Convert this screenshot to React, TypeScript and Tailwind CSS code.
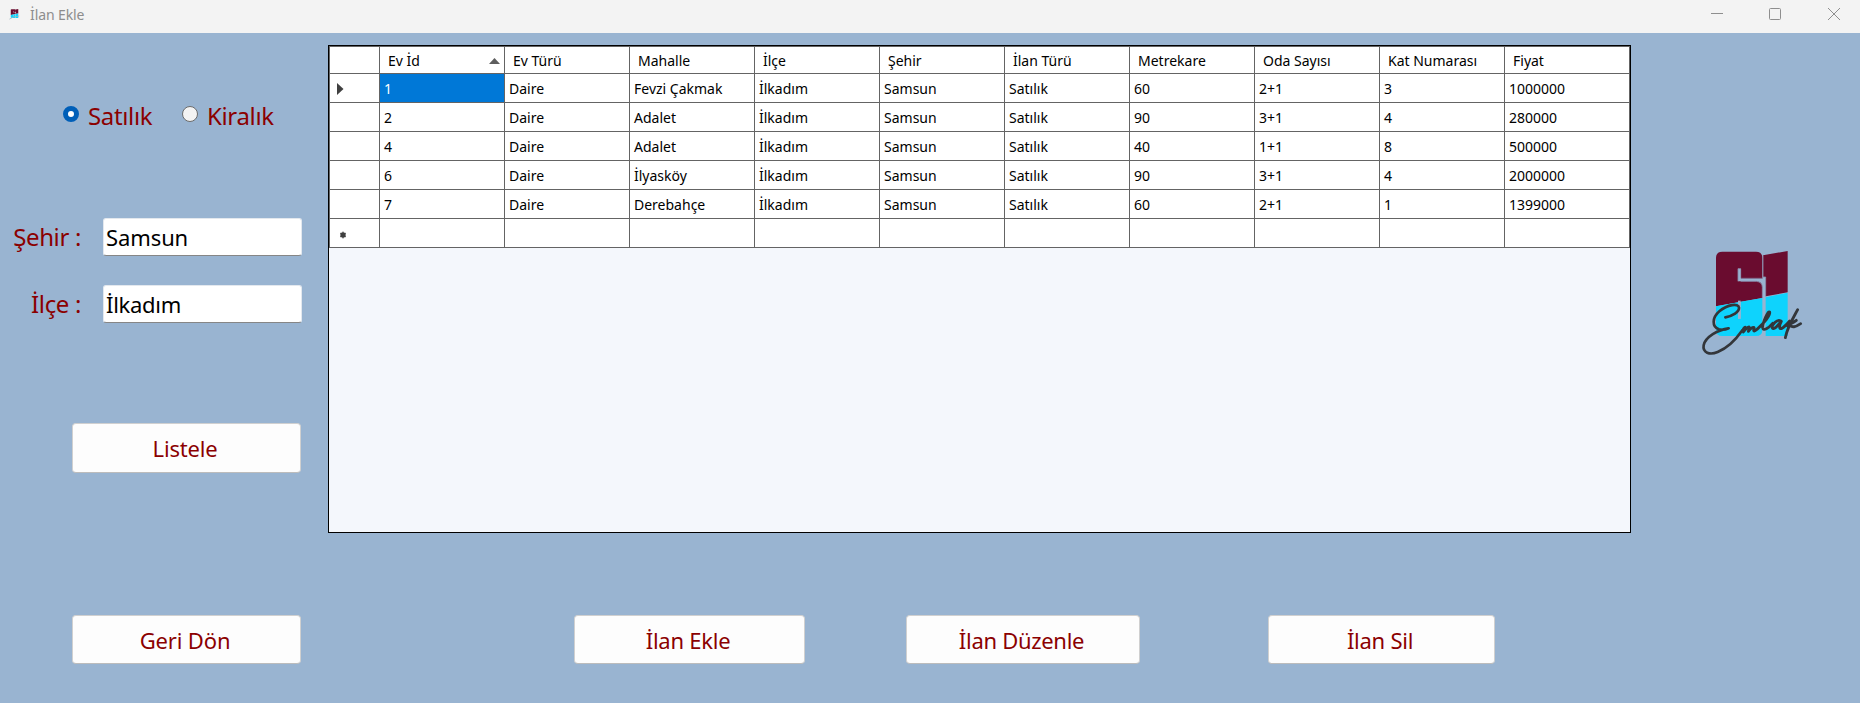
import React from "react";

const columns = ["Ev İd", "Ev Türü", "Mahalle", "İlçe", "Şehir", "İlan Türü", "Metrekare", "Oda Sayısı", "Kat Numarası", "Fiyat"];

const rows = [
  ["1", "Daire", "Fevzi Çakmak", "İlkadım", "Samsun", "Satılık", "60", "2+1", "3", "1000000"],
  ["2", "Daire", "Adalet", "İlkadım", "Samsun", "Satılık", "90", "3+1", "4", "280000"],
  ["4", "Daire", "Adalet", "İlkadım", "Samsun", "Satılık", "40", "1+1", "8", "500000"],
  ["6", "Daire", "İlyasköy", "İlkadım", "Samsun", "Satılık", "90", "3+1", "4", "2000000"],
  ["7", "Daire", "Derebahçe", "İlkadım", "Samsun", "Satılık", "60", "2+1", "1", "1399000"],
  ["", "", "", "", "", "", "", "", "", ""],
];

function Mark() {
  return (
    <>
      <path
        fill="#6a0c2f"
        d="M108 229V84Q108 65 127 65H228Q247 65 247 84V146H183V116H174V154H229Q247 154 247 172V204ZM249 76 323 63V187L257 199V141H249Z"
      />
      <path
        fill="#0ed3fd"
        d="M108 229 174 217V266H182V215L247 204V300Q247 318 228 318H127Q108 318 108 299ZM257 202 323 188V318H257Z"
      />
      <path fill="none" stroke="#8a8bab" strokeWidth="2.5" d="M183 145H248M249 76V141H257V199M182 154H229Q247 156 247 172V204M174 154V116H182V145" />
    </>
  );
}

function Logo() {
  return (
    <svg className="h-[140px] w-[140px]" viewBox="0 0 420 420">
      <Mark />
      <path d="M178 212V266" stroke="#99b4d1" strokeWidth="8" />
      <g fill="none" stroke="#33363a" strokeLinecap="round" strokeLinejoin="round">
        <path
          strokeWidth="8"
          d="M136 262C158 258 178 246 177 233C175 219 143 223 118 244C96 263 95 291 117 298C129 301 139 298 146 295C114 299 76 321 71 346C67 368 89 376 113 366C146 353 171 324 187 301"
        />
        <path strokeWidth="8.5" d="M187 303C192 292 198 287 196 297L190 306C199 294 211 285 208 295L205 304C213 293 225 287 222 297C219 305 224 305 231 298C253 279 272 255 269 246C264 241 247 280 248 293C250 305 266 294 278 280" />
        <path strokeWidth="8.5" d="M301 272C291 267 275 285 277 294C282 302 298 281 304 274C297 287 297 297 304 296C313 292 322 281 329 273" />
        <path strokeWidth="8.5" d="M353 239C343 258 322 291 316 323M321 287C330 282 342 277 349 271M328 286C336 288 338 297 362 281" />
      </g>
    </svg>
  );
}

function Action({ label, box, text }: { label: string; box: string; text: string }) {
  return (
    <button className={`flex shrink-0 justify-center rounded-[4px] border border-[#d0d0d0] border-b-[#bcbcbc] bg-[#fdfdfd] pr-[3px] text-[22px] text-[#8b0000] ${box}`}>
      <span className={`whitespace-nowrap ${text}`}>{label}</span>
    </button>
  );
}

function Field({ value, text }: { value: string; text: string }) {
  return (
    <div className="h-[38px] w-[199px] rounded-[3px] border border-[#e3e8ee] border-b-[#868686] bg-white pl-[2px] text-[22px] leading-[36px] text-black">
      <span className={text}>{value}</span>
    </div>
  );
}

export default function App() {
  return (
    <div className="flex h-[703px] w-[1860px] flex-col overflow-hidden bg-[#99b4d1] font-['Noto_Sans','Open_Sans',sans-serif]">
      <header className="flex h-[33px] shrink-0 bg-[#f3f3f3]">
        <svg className="mt-[9px] ml-[9px] h-[11px] w-[11px]" viewBox="65 60 300 315">
          <Mark />
          <path d="M70 350 180 290 350 260" fill="none" stroke="#9fb4bd" strokeWidth="22" />
        </svg>
        <span className="ml-[10px] text-[14px] leading-[30px] tracking-[-0.1px] text-[#8d8d8d]">İlan Ekle</span>
        <svg className="mt-[7px] ml-auto mr-[19px] h-[14px] w-[132px]" viewBox="0 0 132 14" fill="none" stroke="#8e8e8e">
          <path d="M2 6.5H14" />
          <rect x="60.5" y="1.5" width="11" height="11" rx="1" />
          <path d="M119 1 131 13M131 1 119 13" />
        </svg>
      </header>

      <div className="flex h-[500px] shrink-0">
        <aside className="flex w-[328px] shrink-0 flex-col text-[24px] text-[#8b0000]">
          <div className="mt-[64px] flex h-[36px] pl-[63px] leading-[38px] tracking-[-0.35px]">
            <span className="mt-[9px] h-4 w-4 rounded-full border-[5px] border-[#005fb8] bg-white" />
            <span className="ml-[9px] w-[95px]">Satılık</span>
            <span className="mt-[9px] -ml-px h-4 w-4 rounded-full border border-[#6b6b6b] bg-[#f3f3f3]" />
            <span className="ml-[9px]">Kiralık</span>
          </div>
          <div className="mt-[85px] flex h-[38px]">
            <span className="w-[81px] text-right leading-[37px] tracking-[-0.35px] whitespace-nowrap">Şehir :</span>
            <div className="ml-[22px]"><Field value="Samsun" text="tracking-[-0.1px]" /></div>
          </div>
          <div className="mt-[29px] flex h-[38px]">
            <span className="w-[81px] text-right leading-[37px] tracking-[-0.35px] whitespace-nowrap">İlçe :</span>
            <div className="ml-[22px]"><Field value="İlkadım" text="tracking-[-0.3px]" /></div>
          </div>
          <div className="mt-[100px] pl-[72px]">
            <Action label="Listele" box="h-[50px] w-[229px]" text="leading-[48px] tracking-[-0.2px]" />
          </div>
        </aside>

        <main className="mt-[12px] h-[488px] w-[1303px] shrink-0 border border-black bg-[#f4f7fc] text-[14px] text-black">
          <div className="flex h-[28px] border-t border-b border-l border-[#646464] bg-white leading-[28px]">
            <div className="w-[50px] border-r border-[#646464]" />
            {columns.map((c, i) => (
              <div key={c} className="flex h-[26px] w-[125px] items-start border-r border-[#646464] pl-[8px]">
                <span className="whitespace-nowrap">{c}</span>
                {i === 0 && (
                  <svg className="mt-[11px] mr-[4px] ml-auto h-[6px] w-[11px]" viewBox="0 0 11 6">
                    <path d="M0 6 5.5 0 11 6Z" fill="#5e5e5e" />
                  </svg>
                )}
              </div>
            ))}
          </div>
          {rows.map((r, ri) => (
            <div key={ri} className="flex h-[29px] border-b border-l border-[#646464] bg-white leading-[30px]">
              <div className="w-[50px] border-r border-[#646464]">
                {ri === 0 && (
                  <svg className="mt-[9px] ml-[7px] h-[12px] w-[7px]" viewBox="0 0 7 12">
                    <path d="M0 0 6.5 6 0 12Z" fill="#404040" />
                  </svg>
                )}
                {ri === 5 && (
                  <svg className="mt-[12px] ml-[9px] h-[8px] w-[8px]" viewBox="0 0 8 8">
                    <path d="M4 0.5V7.5M1 2 7 6M7 2 1 6" stroke="#606060" />
                    <circle cx="4" cy="4" r="2.7" fill="#404040" />
                  </svg>
                )}
              </div>
              {r.map((v, ci) => (
                <div
                  key={ci}
                  className={`h-[28px] w-[125px] border-r border-[#646464] pl-[4px] whitespace-nowrap ${ri === 0 && ci === 0 ? "bg-[#0078d7] text-white" : ""}`}
                >
                  {v}
                </div>
              ))}
            </div>
          ))}
        </main>

        <div className="mt-[197px] ml-[49px]">
          <Logo />
        </div>
      </div>

      <footer className="mt-[82px] flex pl-[72px]">
        <Action label="Geri Dön" box="h-[49px] w-[229px]" text="leading-[48px] tracking-[-0.15px]" />
        <Action label="İlan Ekle" box="ml-[273px] h-[49px] w-[231px]" text="leading-[48px] tracking-[-0.25px]" />
        <Action label="İlan Düzenle" box="ml-[101px] h-[49px] w-[234px]" text="leading-[48px] tracking-[-0.3px]" />
        <Action label="İlan Sil" box="ml-[128px] h-[49px] w-[227px]" text="leading-[48px] tracking-[-0.25px]" />
      </footer>
    </div>
  );
}
